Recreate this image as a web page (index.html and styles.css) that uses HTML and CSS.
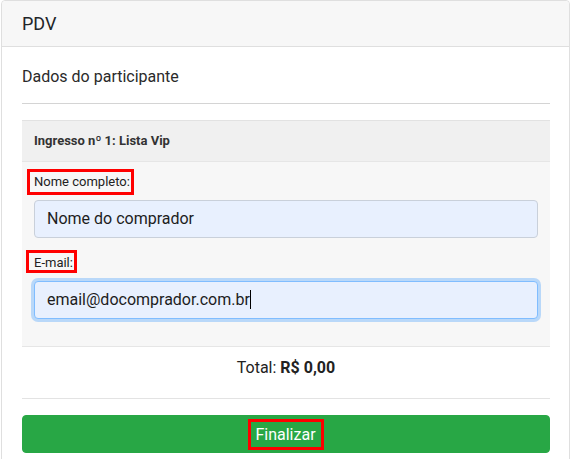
FILE: index.html
```html
<!DOCTYPE html>
<html lang="pt-BR">
<head>
<meta charset="utf-8">
<title>PDV</title>
<link rel="stylesheet" href="styles.css">
</head>
<body>
  <div class="card">
    <div class="card-header">PDV</div>
    <div class="card-body">
      <h6 class="section-title">Dados do participante</h6>
      <hr class="divider">
      <div class="ticket">
        <div class="ticket-header">Ingresso nº 1: Lista Vip</div>
        <div class="ticket-body">
          <div class="form-group">
            <label class="label"><span class="mark">Nome completo:</span></label>
            <div class="field">Nome do comprador</div>
          </div>
          <div class="form-group">
            <label class="label"><span class="mark mark-short">E-mail:</span></label>
            <div class="field field-focus">email@docomprador.com.br<span class="caret"></span></div>
          </div>
        </div>
      </div>
      <div class="total">Total: <strong>R$ 0,00</strong></div>
      <hr class="divider divider-bottom">
      <button class="btn-finish" type="button"><span class="mark mark-btn">Finalizar</span></button>
    </div>
  </div>
</body>
</html>
```

FILE: styles.css
```css
* { box-sizing: border-box; }

html, body {
  margin: 0;
  padding: 0;
  background: #ffffff;
  font-family: Roboto, "Liberation Sans", Arial, sans-serif;
  color: #212529;
}

.card {
  margin-left: 1px;
  width: 569px;
  border: 1px solid #dfdfdf;
  border-radius: 4px;
  background: #fff;
}

.card-header {
  background: #f7f7f7;
  border-bottom: 1px solid #dfdfdf;
  padding: 12px 19px 12px 20px;
  font-size: 18px;
  line-height: 21px;
  color: #212529;
  border-radius: 4px 4px 0 0;
}

.card-body {
  padding: 20px 19px 20px 20px;
}

.section-title {
  margin: 0;
  font-size: 16px;
  line-height: 20px;
  font-weight: 400;
  color: #2a2a2a;
}

.divider {
  border: 0;
  border-top: 1px solid #d4d4d4;
  margin: 16px 0;
  height: 0;
}

.divider-bottom {
  border-top-color: #e3e3e3;
  margin: 18px 0 16px;
}

.ticket {
  border-top: 1px solid #e2e2e2;
  border-bottom: 1px solid #e6e6e6;
}

.ticket-header {
  background: #f0f0f0;
  border-bottom: 1px solid #e6e6e6;
  padding: 0 12px;
  height: 41px;
  line-height: 40px;
  font-size: 13px;
  font-weight: 700;
  color: #333;
}

.ticket-body {
  background: #f7f7f7;
  padding: 10px 12px 12px;
}

.form-group {
  margin-bottom: 15px;
}

.label {
  display: block;
  height: 20px;
  margin-bottom: 8px;
  font-size: 13px;
  line-height: 20px;
  color: #222;
}

.mark {
  display: inline-block;
  vertical-align: top;
  outline: 3px solid #ff0000;
  padding: 0 1px 0 4px;
  margin-left: -4px;
  height: 20px;
}

.mark-short {
  height: 17px;
  padding-left: 5px;
  margin-left: -5px;
}

.field {
  height: 38px;
  border: 1px solid #c9d0da;
  border-radius: 4px;
  background: #e8f0fe;
  padding: 0 12px;
  font-size: 16px;
  line-height: 36px;
  color: #1d1d1d;
  white-space: nowrap;
}

.field-focus {
  border-color: #80bdff;
  box-shadow: 0 0 0 3px rgba(0, 123, 255, 0.25);
}

.caret {
  display: inline-block;
  width: 1px;
  height: 19px;
  background: #000;
  vertical-align: -4px;
}

.total {
  text-align: center;
  font-size: 16px;
  line-height: 24px;
  padding-top: 9px;
  color: #222;
}

.total strong {
  font-weight: 700;
}

.btn-finish {
  display: block;
  width: 100%;
  height: 38px;
  border: 1px solid #28a745;
  border-radius: 4px;
  background: #28a745;
  color: #fff;
  font-family: Roboto, "Liberation Sans", Arial, sans-serif;
  font-size: 16px;
  line-height: 24px;
  padding: 6px 12px;
  text-align: center;
}

.mark-btn {
  height: 25px;
  line-height: 25px;
  padding: 0 5px 0 4px;
  margin-left: 0;
}
```
